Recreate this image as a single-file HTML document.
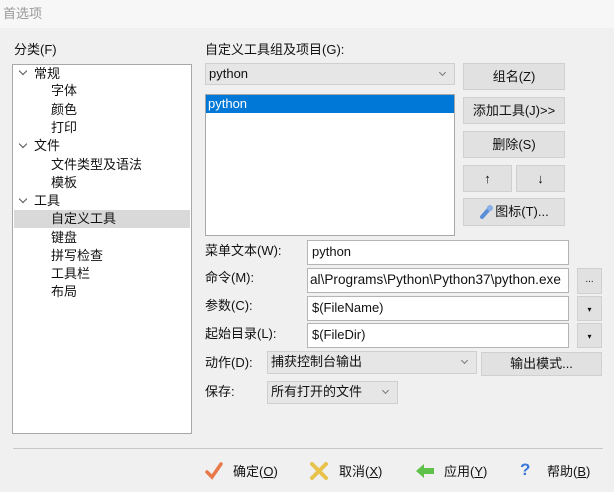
<!DOCTYPE html>
<html><head><meta charset="utf-8"><style>
*{box-sizing:border-box;margin:0;padding:0}
body{width:614px;height:492px;background:#f0f0f0;font-family:"Liberation Sans","Noto Sans CJK SC",sans-serif;font-size:13px;color:#111;position:relative;overflow:hidden}
.a{position:absolute;white-space:nowrap;line-height:16px}
.box{position:absolute;background:#fff;border:1px solid #a8a8a8}
.btn{position:absolute;background:#e1e1e1;border:1px solid #d0d0d0;text-align:center;line-height:25px}
.cmb{position:absolute;background:#e6e6e6;border:1px solid #cfcfcf;padding-left:3px;line-height:20px}
.cmb:after{content:"";position:absolute;right:9px;top:6px;width:4px;height:4px;border-right:1px solid #777;border-bottom:1px solid #777;transform:rotate(45deg)}
.inp{position:absolute;background:#fff;border:1px solid #b4b4b4;padding-left:4px;line-height:22px}
.chev{position:absolute;width:6px;height:6px;border-right:1.5px solid #555;border-bottom:1.5px solid #555;transform:rotate(45deg)}
</style></head><body>
<div style="position:absolute;left:0;top:0;width:614px;height:28px;background:#f7f7f7"></div>
<div class="a" style="left:3px;top:6px;color:#999">首选项</div>
<div class="a" style="left:14px;top:42px">分类(F)</div>
<div class="box" style="left:12px;top:64px;width:180px;height:370px"></div>
<div style="position:absolute;left:14px;top:210px;width:176px;height:18px;background:#d9d9d9"></div>
<div class="chev" style="left:20px;top:68px"></div><div class="a" style="left:34px;top:66px">常规</div>
<div class="a" style="left:51px;top:83px">字体</div>
<div class="a" style="left:51px;top:102px">颜色</div>
<div class="a" style="left:51px;top:120px">打印</div>
<div class="chev" style="left:20px;top:141px"></div><div class="a" style="left:34px;top:138px">文件</div>
<div class="a" style="left:51px;top:157px">文件类型及语法</div>
<div class="a" style="left:51px;top:175px">模板</div>
<div class="chev" style="left:20px;top:196px"></div><div class="a" style="left:34px;top:193px">工具</div>
<div class="a" style="left:51px;top:211px">自定义工具</div>
<div class="a" style="left:51px;top:230px">键盘</div>
<div class="a" style="left:51px;top:248px">拼写检查</div>
<div class="a" style="left:51px;top:266px">工具栏</div>
<div class="a" style="left:51px;top:284px">布局</div>

<div class="a" style="left:205px;top:42px">自定义工具组及项目(G):</div>
<div class="cmb" style="left:205px;top:63px;width:250px;height:22px">python</div>
<div class="box" style="left:205px;top:94px;width:250px;height:142px"></div>
<div style="position:absolute;left:206px;top:95px;width:248px;height:18px;background:#0078d7;color:#fff;padding-left:2px;line-height:18px">python</div>
<div class="btn" style="left:463px;top:63px;width:102px;height:27px">组名(Z)</div>
<div class="btn" style="left:463px;top:97px;width:102px;height:27px">添加工具(J)&gt;&gt;</div>
<div class="btn" style="left:463px;top:131px;width:102px;height:27px">删除(S)</div>
<div class="btn" style="left:463px;top:165px;width:49px;height:27px">↑</div>
<div class="btn" style="left:516px;top:165px;width:49px;height:27px">↓</div>
<div class="btn" style="left:463px;top:198px;width:102px;height:28px"><svg width="16" height="16" viewBox="0 0 16 16" style="vertical-align:-3px"><path d="M3 14 L10 6" stroke="#5a8ed8" stroke-width="4" stroke-linecap="round"/><circle cx="11" cy="5" r="3" fill="#8ab0e6"/></svg>图标(T)...</div>

<div class="a" style="left:205px;top:243px">菜单文本(W):</div>
<div class="inp" style="left:307px;top:240px;width:262px;height:25px">python</div>
<div class="a" style="left:205px;top:270px">命令(M):</div>
<div class="inp" style="left:307px;top:268px;width:262px;height:25px;overflow:hidden;padding-left:2px;font-size:13.6px">al\Programs\Python\Python37\python.exe</div>
<div class="btn" style="left:577px;top:268px;width:25px;height:26px;line-height:22px;font-size:10px">...</div>
<div class="a" style="left:205px;top:298px">参数(C):</div>
<div class="inp" style="left:307px;top:296px;width:262px;height:25px">$(FileName)</div>
<div class="btn" style="left:577px;top:296px;width:25px;height:25px;font-size:8px">▾</div>
<div class="a" style="left:205px;top:326px">起始目录(L):</div>
<div class="inp" style="left:307px;top:323px;width:262px;height:25px">$(FileDir)</div>
<div class="btn" style="left:577px;top:323px;width:25px;height:25px;font-size:8px">▾</div>
<div class="a" style="left:205px;top:355px">动作(D):</div>
<div class="cmb" style="left:267px;top:351px;width:210px;height:23px">捕获控制台输出</div>
<div class="btn" style="left:481px;top:352px;width:121px;height:24px;line-height:22px">输出模式...</div>
<div class="a" style="left:205px;top:384px">保存:</div>
<div class="cmb" style="left:267px;top:381px;width:131px;height:23px">所有打开的文件</div>

<div style="position:absolute;left:13px;top:448px;width:590px;height:1px;background:#c8c8c8"></div>
<svg style="position:absolute;left:204px;top:461px" width="20" height="20" viewBox="0 0 20 20"><path d="M3 11 L8 16 L17 3" stroke="#e8794a" stroke-width="3.5" fill="none" stroke-linecap="round"/></svg>
<div class="a" style="left:233px;top:464px">确定(<u>O</u>)</div>
<svg style="position:absolute;left:309px;top:461px" width="20" height="20" viewBox="0 0 20 20"><path d="M3 3 L17 17 M17 3 L3 17" stroke="#e8c24a" stroke-width="4" stroke-linecap="round"/></svg>
<div class="a" style="left:339px;top:464px">取消(<u>X</u>)</div>
<svg style="position:absolute;left:414px;top:461px" width="22" height="20" viewBox="0 0 22 20"><path d="M2 10 L10 3 L10 7 L20 7 L20 13 L10 13 L10 17 Z" fill="#5fc14a"/></svg>
<div class="a" style="left:444px;top:464px">应用(<u>Y</u>)</div>
<div class="a" style="left:520px;top:462px;color:#3a78d8;font-weight:bold;font-size:17px">?</div>
<div class="a" style="left:547px;top:464px">帮助(<u>B</u>)</div>
</body></html>
